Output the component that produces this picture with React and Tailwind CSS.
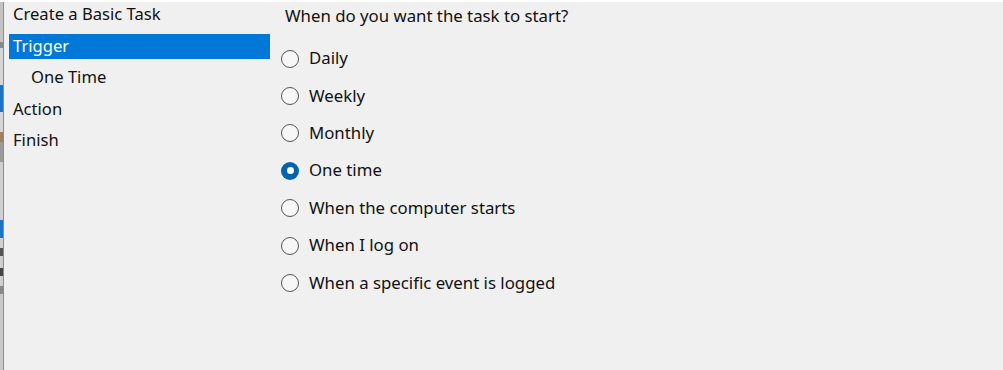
import React from 'react';

const steps = [
    { label: 'Create a Basic Task', indent: false, selected: false },
    { label: 'Trigger', indent: false, selected: true },
    { label: 'One Time', indent: true, selected: false },
    { label: 'Action', indent: false, selected: false },
    { label: 'Finish', indent: false, selected: false },
];

const options = [
    'Daily',
    'Weekly',
    'Monthly',
    'One time',
    'When the computer starts',
    'When I log on',
    'When a specific event is logged',
];

const Radio = ({ checked }) =>
    checked ? (
        <span className="w-[18px] h-[18px] rounded-full bg-[#0063b1] flex items-center justify-center shrink-0">
            <span className="w-[7px] h-[7px] rounded-full bg-white" />
        </span>
    ) : (
        <span className="w-[18px] h-[18px] rounded-full border-[1.5px] border-[#555] bg-[#f7f7f7] shrink-0" />
    );

const App = () => {
    return (
        <div
            className="w-[1003px] h-[370px] bg-[#f0f0f0] flex flex-col overflow-hidden text-[#111]"
            style={{ fontFamily: '"Noto Sans", "Open Sans", sans-serif' }}
        >
            <div className="h-[2px] bg-white shrink-0" />
            <div className="flex flex-1">
                {/* background window sliver */}
                <div className="w-[3px] flex flex-col bg-[#cfcfcf] shrink-0">
                    <div className="h-[40px] bg-[#c4c4c4]" />
                    <div className="h-[6px] bg-[#8a8a8a]" />
                    <div className="h-[37px] bg-[#d6d6d6]" />
                    <div className="h-[27px] bg-[#1a73c9]" />
                    <div className="h-[20px] bg-[#d6d6d6]" />
                    <div className="h-[10px] bg-[#a08060]" />
                    <div className="h-[20px] bg-[#9a9a9a]" />
                    <div className="h-[58px] bg-[#d0d0d0]" />
                    <div className="h-[18px] bg-[#1a73c9]" />
                    <div className="h-[10px] bg-[#d0d0d0]" />
                    <div className="h-[8px] bg-[#555]" />
                    <div className="h-[12px] bg-[#cfcfcf]" />
                    <div className="h-[8px] bg-[#444]" />
                    <div className="h-[10px] bg-[#cfcfcf]" />
                    <div className="h-[8px] bg-[#888]" />
                    <div className="flex-1 bg-[#cacaca]" />
                </div>
                <div className="w-px bg-[#8c8c8c] shrink-0" />

                <div className="w-[266px] shrink-0 flex flex-col -mt-[3px] pl-[5px]">
                    {steps.map((s) =>
                        s.selected ? (
                            <div key={s.label} className="h-[31.5px] flex items-center">
                                <div className="h-[25px] w-full bg-[#0078d7] text-white flex items-center pl-[4px] text-[16.6px] leading-none">
                                    {s.label}
                                </div>
                            </div>
                        ) : (
                            <div
                                key={s.label}
                                className={`h-[31.5px] flex items-center text-[16.6px] leading-none ${
                                    s.indent ? 'pl-[22px]' : 'pl-[4px]'
                                }`}
                            >
                                {s.label}
                            </div>
                        )
                    )}
                </div>

                <div className="flex-1 flex flex-col pl-[11px] pt-[6px]">
                    <div className="text-[16.8px] leading-none h-[21px] pl-[4px]">
                        When do you want the task to start?
                    </div>
                    <div className="flex flex-col mt-[11px]">
                        {options.map((o) => (
                            <label key={o} className="h-[37.4px] flex items-center gap-[10px] text-[16.8px] leading-none">
                                <Radio checked={o === 'One time'} />
                                <span>{o}</span>
                            </label>
                        ))}
                    </div>
                </div>
            </div>
        </div>
    );
};

export default App;
